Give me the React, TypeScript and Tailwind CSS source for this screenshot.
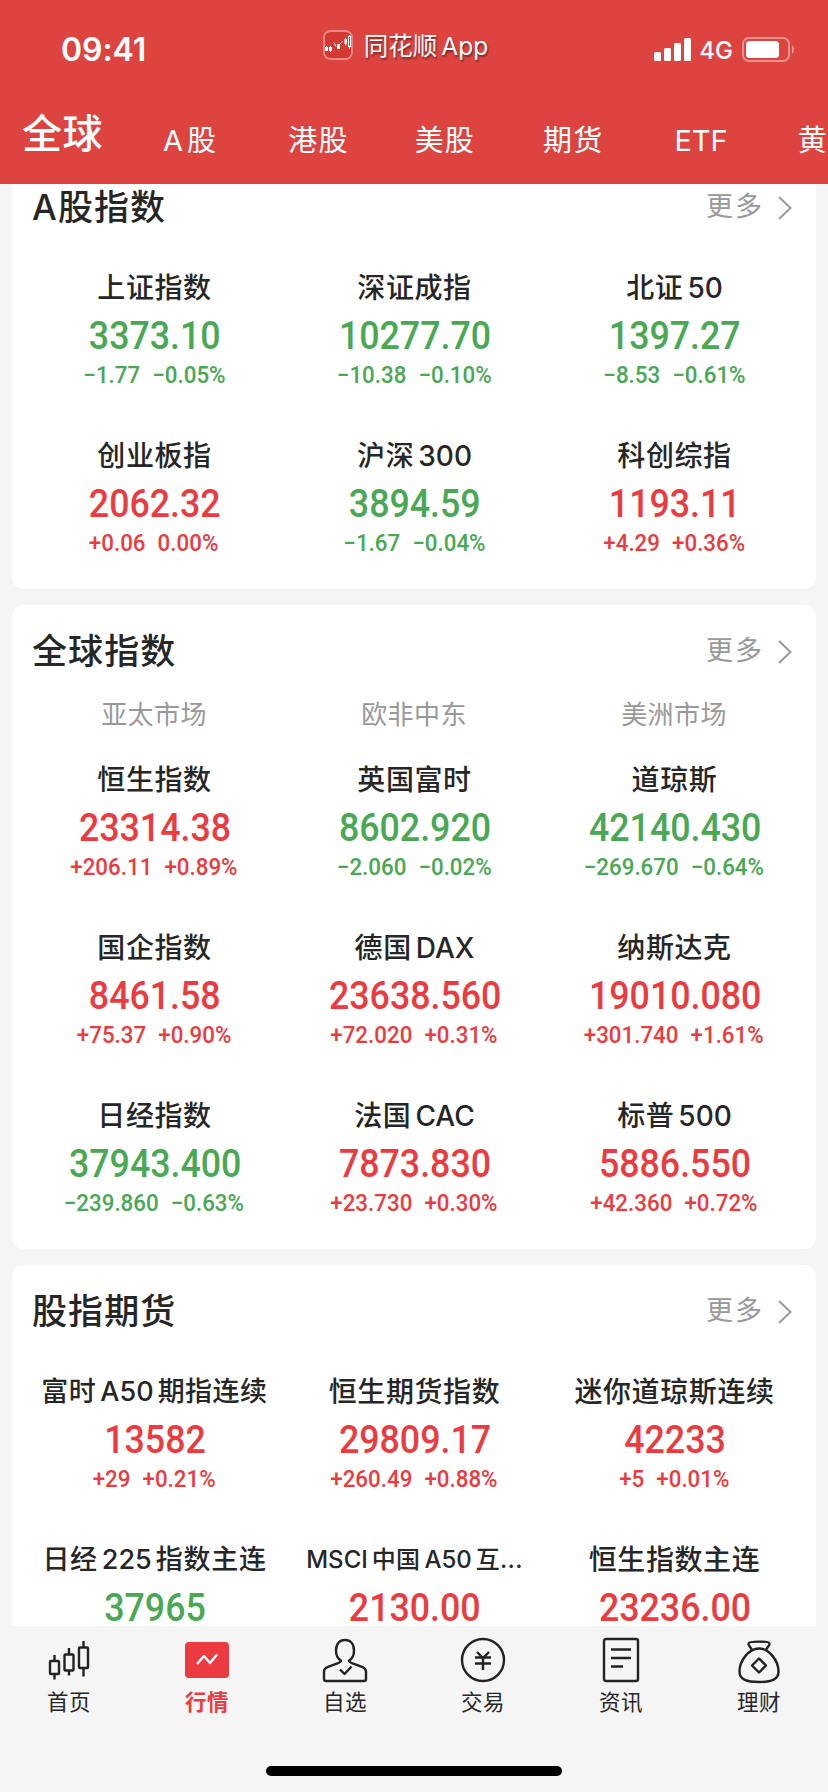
import React from 'react';

type Trend = 'up' | 'down';

interface Quote {
  name: string;
  value: string;
  change?: string;
  percent?: string;
  trend: Trend;
  nameClass?: string;
}

interface Section {
  title: string;
  columns?: string[];
  quotes: Quote[];
}

const sections: Section[] = [
  {
    title: 'A股指数',
    quotes: [
      { name: '上证指数', value: '3373.10', change: '−1.77', percent: '−0.05%', trend: 'down' },
      { name: '深证成指', value: '10277.70', change: '−10.38', percent: '−0.10%', trend: 'down' },
      { name: '北证50', value: '1397.27', change: '−8.53', percent: '−0.61%', trend: 'down' },
      { name: '创业板指', value: '2062.32', change: '+0.06', percent: '0.00%', trend: 'up' },
      { name: '沪深300', value: '3894.59', change: '−1.67', percent: '−0.04%', trend: 'down' },
      { name: '科创综指', value: '1193.11', change: '+4.29', percent: '+0.36%', trend: 'up' },
    ],
  },
  {
    title: '全球指数',
    columns: ['亚太市场', '欧非中东', '美洲市场'],
    quotes: [
      { name: '恒生指数', value: '23314.38', change: '+206.11', percent: '+0.89%', trend: 'up' },
      { name: '英国富时', value: '8602.920', change: '−2.060', percent: '−0.02%', trend: 'down' },
      { name: '道琼斯', value: '42140.430', change: '−269.670', percent: '−0.64%', trend: 'down' },
      { name: '国企指数', value: '8461.58', change: '+75.37', percent: '+0.90%', trend: 'up' },
      { name: '德国DAX', value: '23638.560', change: '+72.020', percent: '+0.31%', trend: 'up' },
      { name: '纳斯达克', value: '19010.080', change: '+301.740', percent: '+1.61%', trend: 'up' },
      { name: '日经指数', value: '37943.400', change: '−239.860', percent: '−0.63%', trend: 'down' },
      { name: '法国CAC', value: '7873.830', change: '+23.730', percent: '+0.30%', trend: 'up' },
      { name: '标普500', value: '5886.550', change: '+42.360', percent: '+0.72%', trend: 'up' },
    ],
  },
  {
    title: '股指期货',
    quotes: [
      { name: '富时A50期指连续', value: '13582', change: '+29', percent: '+0.21%', trend: 'up', nameClass: 'text-[27px] tracking-[0.5px]' },
      { name: '恒生期货指数', value: '29809.17', change: '+260.49', percent: '+0.88%', trend: 'up' },
      { name: '迷你道琼斯连续', value: '42233', change: '+5', percent: '+0.01%', trend: 'up' },
      { name: '日经225指数主连', value: '37965', trend: 'down', nameClass: 'text-[27px] tracking-[0.7px]' },
      { name: 'MSCI中国A50互...', value: '2130.00', trend: 'up', nameClass: 'text-[24px] tracking-[0.3px]' },
      { name: '恒生指数主连', value: '23236.00', trend: 'up' },
    ],
  },
];

const tabs = [
  { label: 'A股', left: 'ml-[60px]' },
  { label: '港股', left: 'ml-[71px]' },
  { label: '美股', left: 'ml-[66px]' },
  { label: '期货', left: 'ml-[68px]' },
  { label: 'ETF', left: 'ml-[71px]' },
  { label: '黄', left: 'ml-[70px]' },
];

// Latin runs get a small gap on the sides that touch Chinese characters
const MixedText: React.FC<{ text: string }> = ({ text }) => {
  const parts = text.split(/([A-Za-z0-9]+)/).filter(Boolean);
  return (
    <>
      {parts.map((part, i) => {
        if (!/^[A-Za-z0-9]+$/.test(part)) return <span key={i}>{part}</span>;
        const first = i === 0;
        const last = i === parts.length - 1;
        return (
          <span key={i} className={`tracking-normal ${first ? '' : 'ml-[4px]'} ${last ? '' : 'mr-[4px]'}`}>
            {part}
          </span>
        );
      })}
    </>
  );
};

const StatusBar: React.FC = () => (
  <div className="grid grid-cols-3 h-[92px] shrink-0">
    <div className="pl-[61px] pt-[30px] text-[32px] leading-[40px] font-semibold tracking-[-0.1px]">09:41</div>
    <div className="flex items-start justify-center pt-[30px] pr-[17px]">
      <svg width="30" height="30" viewBox="0 0 30 30" fill="none" className="mr-[11px] shrink-0">
        <rect x="1" y="1" width="28" height="28" rx="6.5" fill="#d43a33" stroke="#ea8a86" strokeWidth="1.8" />
        <rect x="2" y="17" width="3" height="4" fill="#fff" />
        <rect x="6.5" y="17.500" width="2" height="3" stroke="#fff" />
        <path d="M3.500 16v5M7.500 16v6M11 12.500l2 4M17 14l2.500-2.500" stroke="#fff" />
        <rect x="14" y="14" width="3" height="5" fill="#fff" />
        <rect x="21.500" y="9" width="2.500" height="5" fill="#fff" />
        <path d="M22.700 8v7.500" stroke="#fff" />
        <rect x="25.500" y="6.500" width="2" height="10" stroke="#fff" />
        <path d="M26.500 5v1.500M26.500 16.500v2" stroke="#fff" />
      </svg>
      <span className="whitespace-nowrap text-[24.500px] leading-[32px] [text-shadow:1px_2px_2px_rgba(0,0,0,0.45)]">
        <span>同花顺</span>
        <span className="ml-[4px]">App</span>
      </span>
    </div>
    <div className="flex items-start justify-end pt-[37px] pr-[33px]">
      <svg width="38" height="25" viewBox="0 0 38 25" fill="#fff" className="mr-[7px]">
        <rect x="0" y="15" width="7" height="9" rx="1.500" />
        <rect x="10" y="11" width="7" height="13" rx="1.500" />
        <rect x="20" y="6" width="7" height="18" rx="1.500" />
        <rect x="30" y="1" width="7" height="23" rx="1.500" />
      </svg>
      <span className="text-[24px] leading-[28px] font-medium mr-[9px]">4G</span>
      <svg width="53" height="25" viewBox="0 0 53 25" fill="none">
        <rect x="1" y="1" width="46" height="23" rx="6" stroke="#fff" strokeOpacity="0.42" strokeWidth="2" />
        <rect x="4" y="4" width="33" height="17" rx="3.500" fill="#fff" />
        <path d="M50 8.500c2.600 1 2.600 7 0 8z" fill="#fff" fillOpacity="0.5" />
      </svg>
    </div>
  </div>
);

const QuoteCell: React.FC<{ quote: Quote }> = ({ quote }) => (
  <div
    className={`flex h-[124px] flex-col items-center whitespace-nowrap ${
      quote.trend === 'up' ? 'text-[#eb3b40]' : 'text-[#48a853]'
    }`}
  >
    <div className={`h-[44px] pl-[1px] leading-[46px] font-medium text-[#262626] ${quote.nameClass ?? 'text-[28px] tracking-[0.6px]'}`}>
      <MixedText text={quote.name} />
    </div>
    <div className="h-[53px] scale-x-[0.905] pl-[2px] font-[Roboto] text-[39.5px] leading-[53px] font-medium">{quote.value}</div>
    <div className="flex h-[27px] scale-x-[0.93] gap-[13px] font-[Roboto] text-[24px] leading-[27px] font-medium">
      <span>{quote.change}</span>
      <span>{quote.percent}</span>
    </div>
  </div>
);

const QuoteCard: React.FC<{ section: Section }> = ({ section }) => (
  <section className="rounded-[12px] bg-white px-3 pb-8">
    <div className="flex h-[92px] items-center justify-between pl-[8px] pr-[12px] pt-[1px]">
      <h2 className="text-[35px] font-medium tracking-[1.1px] text-[#262626]">{section.title}</h2>
      <div className="flex items-center text-[27px] tracking-[2px] text-[#999]">
        更多
        <svg width="14" height="24" viewBox="0 0 14 24" fill="none" className="ml-[14px]">
          <path d="M1 1l11.500 11L1 23" stroke="#999" strokeWidth="2" />
        </svg>
      </div>
    </div>
    {section.columns ? (
      <div className="mb-6 grid h-[36px] grid-cols-3 text-center text-[26px] leading-[36px] tracking-[0.4px] text-[#999]">
        {section.columns.map((c) => (
          <span key={c}>{c}</span>
        ))}
      </div>
    ) : (
      <div className="h-3" />
    )}
    <div className="grid grid-cols-3 gap-y-[44px]">
      {section.quotes.map((q) => (
        <QuoteCell key={q.name} quote={q} />
      ))}
    </div>
  </section>
);

const navItems = [
  {
    label: '首页',
    icon: (
      <>
        <rect x="3" y="23" width="9" height="13" rx="1" />
        <path d="M7.500 17v6M7.500 36v5.500M22 10v6M22 32.500v5M36.500 3v6.500M36.500 30v8.500" />
        <rect x="17.500" y="16.500" width="9" height="16" rx="1" />
        <rect x="32" y="9.500" width="9" height="20.500" rx="1" />
      </>
    ),
  },
  {
    label: '行情',
    active: true,
    icon: (
      <>
        <rect x="0" y="4" width="44" height="36" rx="4" fill="#eb3b40" stroke="none" />
        <path d="M12 26l7-8 6 7 7-8.500" stroke="#fff" strokeWidth="2.400" />
      </>
    ),
  },
  {
    label: '自选',
    icon: (
      <>
        <path d="M18 22.500c-3-1.500-5-5.500-5-10C13 6 16.500 2 22 2s9 4 9 10.500c0 4.500-2 8.500-5 10 0 2 2.500 2.500 5 3.300l8 3c2.500 1 4 2.200 4 4.700v7.500c0 1.500-.7 2-2 2H3c-1.300 0-2-.5-2-2v-7.500c0-2.500 1.500-3.700 4-4.700l8-3c2.500-.8 5-1.300 5-3.300z" />
        <path d="M17 31.500l4.500 4.500 7-7.500" />
      </>
    ),
  },
  {
    label: '交易',
    icon: (
      <>
        <circle cx="22" cy="22" r="21" />
        <path d="M16 14l6 6 6-6M14 19.500h16M14 25.500h16M22 20v12" strokeWidth="2.400" />
      </>
    ),
  },
  {
    label: '资讯',
    icon: (
      <>
        <rect x="5" y="1" width="34" height="42" rx="2" />
        <path d="M12 11.500h20M12 20h20M12 28.500h12" strokeWidth="2.400" />
      </>
    ),
  },
  {
    label: '理财',
    icon: (
      <>
        <path d="M15 12c-1-3-4-4.500-3.500-6.500C12 3 32 3 32.500 5.500 33 7.500 30 9 29 12" />
        <path d="M22 10.500c10 0 19.500 12 19.500 23C41.500 42 34 44 22 44S2.500 42 2.500 33.500c0-11 9.500-23 19.500-23z" />
        <path d="M22 20.500l7 7-7 7-7-7z" />
      </>
    ),
  },
];

const App: React.FC = () => {
  return (
    <div className="flex h-[1792px] w-[828px] flex-col overflow-hidden bg-[#f5f5f5] font-[Inter,'Noto_Sans_CJK_SC',sans-serif]">
      <header className="flex h-[184px] shrink-0 flex-col overflow-hidden bg-[#dd433f] text-white">
        <StatusBar />
        <nav className="flex items-start whitespace-nowrap pl-[22px]">
          <span className="pt-[12px] text-[40px] leading-[60px] font-medium tracking-[0.5px]">全球</span>
          {tabs.map((t) => (
            <span key={t.label} className={`shrink-0 pt-[29px] text-[29px] leading-[40px] tracking-[1.200px] ${t.left}`}>
              <MixedText text={t.label} />
            </span>
          ))}
        </nav>
      </header>

      <main className="min-h-0 flex-1 overflow-hidden">
        <div className="-mt-[23px] flex flex-col gap-4 px-3">
          {sections.map((s) => (
            <QuoteCard key={s.title} section={s} />
          ))}
        </div>
      </main>

      <footer className="flex h-[166px] shrink-0 flex-col items-center bg-[#f5f5f5]">
        <div className="grid h-[140px] w-full grid-cols-6 pt-[12px]">
          {navItems.map((item) => (
            <div key={item.label} className="flex flex-col items-center">
              <svg width="44" height="46" viewBox="0 0 44 46" fill="none" stroke="#222" strokeWidth="2.400" strokeLinejoin="round" className="overflow-visible">
                {item.icon}
              </svg>
              <span
                className={`mt-[3px] text-[21.500px] leading-[30px] tracking-[0.500px] ${
                  item.active ? 'font-bold text-[#eb3b40]' : 'font-normal text-[#262626]'
                }`}
              >
                {item.label}
              </span>
            </div>
          ))}
        </div>
        <div className="h-[10px] w-[296px] rounded-full bg-black" />
      </footer>
    </div>
  );
};

export default App;
